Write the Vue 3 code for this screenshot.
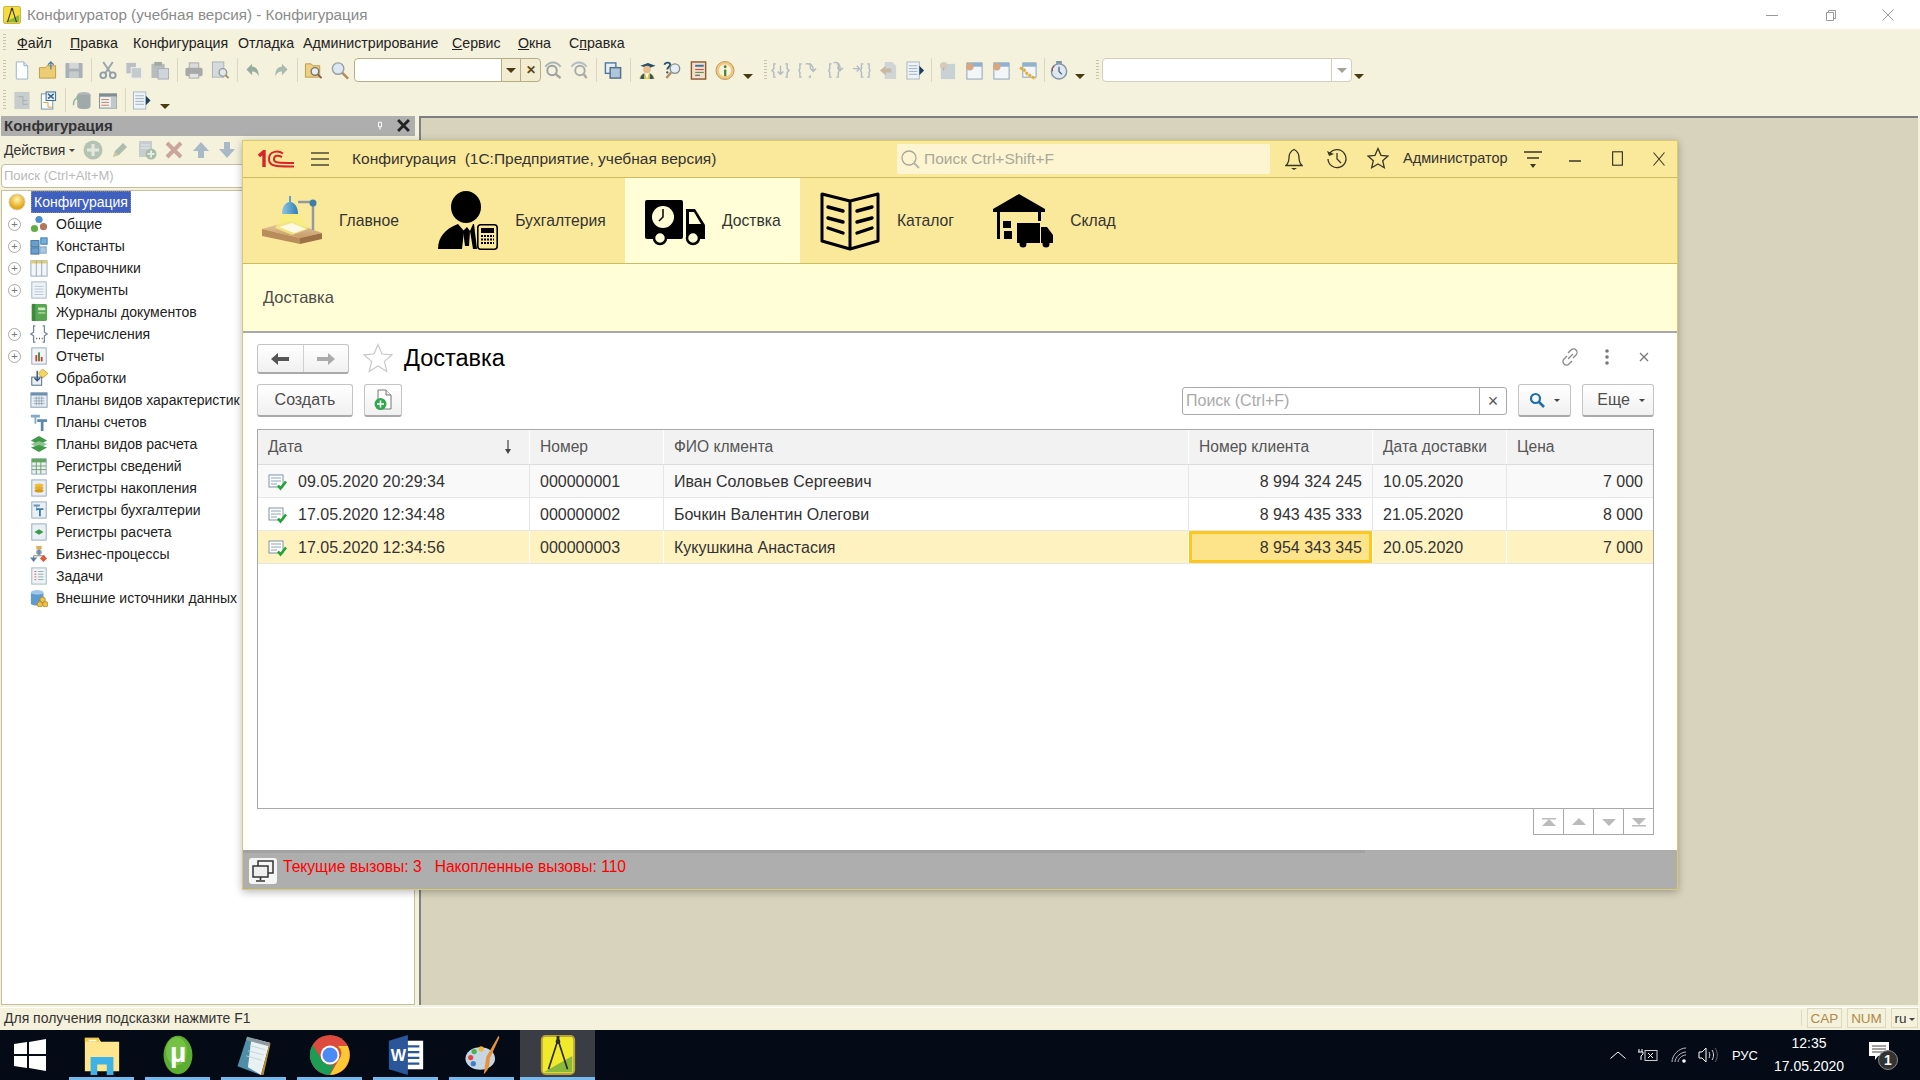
<script setup>
// menu du configurateur
const menu = [
  { u: 'Ф', t: 'айл', w: 53 },
  { u: 'П', t: 'равка', w: 63 },
  { p: 'Конфигурация', w: 105 },
  { p: 'Отладка', w: 65 },
  { p: 'Администрирование', w: 149 },
  { u: 'С', t: 'ервис', w: 66 },
  { u: 'О', t: 'кна', w: 51 },
  { p: 'С', u: 'п', t: 'равка', w: 60 }
]

// petites icônes 20x20
const ic = {
  new: '<path d="M4 1h8l4 4v14H4z" fill="#fdfeff" stroke="#9db2c6"/><path d="M12 1v4h4" fill="#d5e4f2" stroke="#9db2c6"/>',
  open: '<path d="M1 7h6l2-2h9v13H1z" fill="#eccd74" stroke="#b99b49"/><path d="M13 9V1M10 4l3-3 3 3" fill="none" stroke="#5a7ea0" stroke-width="1.4"/>',
  save: '<rect x="1" y="2" width="18" height="16" rx="1" fill="#aab1b5"/><rect x="5" y="2" width="10" height="6" fill="#d3d7d9"/><rect x="5" y="11" width="10" height="7" fill="#c5cacd"/>',
  cut: '<path d="M5 1l8 12M15 1L7 13" stroke="#9aa6ae" stroke-width="2"/><circle cx="5" cy="15" r="3" fill="none" stroke="#8f9ca6" stroke-width="2"/><circle cx="15" cy="15" r="3" fill="none" stroke="#8f9ca6" stroke-width="2"/>',
  copy: '<rect x="2" y="2" width="10" height="11" fill="#b9bfc4"/><rect x="7" y="7" width="11" height="11" fill="#c5cacd" stroke="#eee"/>',
  paste: '<rect x="1" y="3" width="14" height="15" rx="1" fill="#b8bcbc"/><rect x="4" y="1" width="8" height="4" fill="#a4a99f"/><rect x="8" y="8" width="11" height="11" fill="#cfd4d8" stroke="#aab"/>',
  print: '<rect x="5" y="2" width="10" height="6" fill="#dcdcdc" stroke="#aaa"/><rect x="1" y="7" width="18" height="9" rx="2" fill="#a8a8a6"/><rect x="5" y="13" width="10" height="5" fill="#e2e2e2" stroke="#aaa"/>',
  prev: '<rect x="2" y="1" width="12" height="16" fill="#d6dadd" stroke="#aab3ba"/><circle cx="13" cy="12" r="4" fill="#e2e9ee" stroke="#9a9a94" stroke-width="1.5"/><path d="M16 15l3 3" stroke="#a58d6c" stroke-width="2"/>',
  undo: '<path d="M8 3L2 9l6 6v-4c3 0 5 1 7 5 0-6-2-10-7-10z" fill="#9aaba2"/>',
  redo: '<path d="M12 3l6 6-6 6v-4c-3 0-5 1-7 5 0-6 2-10 7-10z" fill="#a9bab1"/>',
  find: '<path d="M1 3h6l2 2h7v12H1z" fill="#ecd183" stroke="#b99b49"/><circle cx="11" cy="11" r="4" fill="#e6eef4" stroke="#7d7468" stroke-width="1.5"/><path d="M14 14l4 4" stroke="#85604a" stroke-width="2"/>',
  mag: '<circle cx="8" cy="8" r="6" fill="#dbe8f3" stroke="#9a9f9f" stroke-width="1.5"/><path d="M12.500 12.500l6 6" stroke="#b08a61" stroke-width="2.500"/>',
  back: '<circle cx="9" cy="10" r="5" fill="none" stroke="#9a9f9f" stroke-width="2"/><path d="M13 14l5 4" stroke="#a8a39a" stroke-width="2.500"/><path d="M2 6C6 0 14 0 18 6" fill="none" stroke="#a9b5b5" stroke-width="2"/>',
  fwd: '<circle cx="11" cy="10" r="5" fill="none" stroke="#a6abab" stroke-width="2"/><path d="M15 14l3 4" stroke="#aca79e" stroke-width="2.500"/><path d="M2 6C6 0 14 0 18 6" fill="none" stroke="#b3bebe" stroke-width="2"/>',
  wins: '<rect x="2" y="2" width="11" height="11" fill="#e8eef3" stroke="#4f7ba3" stroke-width="1.500"/><rect x="7" y="7" width="11" height="11" fill="#aec6db" stroke="#53708a" stroke-width="1.500"/>',
  student: '<path d="M3 5l8-3 8 3-8 3z" fill="#274f68"/><circle cx="10" cy="9" r="4" fill="#e9bd8f"/><path d="M2 19c1-5 4-6 8-6s7 1 8 6z" fill="#e8c43a"/><path d="M8 13l2 6 2-6z" fill="#fff"/><path d="M3 19c0-3 2-5 4-6v6zM17 19c0-3-2-5-4-6v6z" fill="#2b5872"/>',
  help: '<path d="M1 4c1-3 6-3 6 0 0 2-3 2-3 5" fill="none" stroke="#25506e" stroke-width="2"/><circle cx="4" cy="12" r="1.200" fill="#25506e"/><circle cx="12" cy="8" r="5" fill="#e6eff6" stroke="#8b8f8c" stroke-width="1.500"/><path d="M8 12l-5 6" stroke="#b58b60" stroke-width="2.500"/>',
  bookr: '<rect x="2" y="1" width="15" height="18" fill="#f1dfca" stroke="#8d5a36" stroke-width="1.500"/><path d="M6 5h9" stroke="#3a6ea5" stroke-width="2"/><path d="M6 9h9" stroke="#d33"/><path d="M6 12h9" stroke="#3a8a3a"/><path d="M6 15h5" stroke="#444"/>',
  info: '<circle cx="10" cy="10" r="9.500" fill="#f3c67a" stroke="#b89a6a"/><circle cx="10" cy="10" r="6.500" fill="#fbf3dd"/><rect x="9" y="9" width="2.400" height="7" fill="#3f8a2d"/><circle cx="10.200" cy="6" r="1.500" fill="#3f8a2d"/>',
  br1: '<path d="M5 3H3v5l-2 2 2 2v5h2M15 3h2v5l2 2-2 2v5h-2" fill="none" stroke="#b3bcc4" stroke-width="1.500"/><path d="M10 5v9M7 11l3 3 3-3" fill="none" stroke="#b3bcc4" stroke-width="1.500"/>',
  br2: '<path d="M4 17H2v-5l-1-2 1-2V3h2M11 3h2v5M11 17h2v-2" fill="none" stroke="#b3bcc4" stroke-width="1.500"/><path d="M8 3c6-1 8 2 8 7M13 8l3 3 3-3" fill="none" stroke="#b3bcc4" stroke-width="1.500"/>',
  br3: '<path d="M7 3H5v5l-1 2 1 2v5h2M12 17h2v-5l1-2-1-2V3h-2" fill="none" stroke="#b3bcc4" stroke-width="1.500"/><path d="M9 2c5-2 7 2 7 7M13 7l3 3 3-3" fill="none" stroke="#b3bcc4" stroke-width="1.500"/>',
  br4: '<path d="M1 8h6M5 5l3 3-3 3" fill="none" stroke="#b3bcc4" stroke-width="1.500"/><path d="M12 3h-2v5l-1 2 1 2v5h2M16 3h2v5l1 2-1 2v5h-2" fill="none" stroke="#b3bcc4" stroke-width="1.500"/>',
  pdoc: '<path d="M6 1h8l4 4v14H6z" fill="#cfd4d6"/><path d="M1 10l6-5v3h6v4H7v3z" fill="#c8b9a4"/>',
  runb: '<rect x="1" y="1" width="13" height="18" fill="#eef3f7" stroke="#a8b7c4"/><path d="M3 5h9M3 8h9M3 11h9M3 14h9" stroke="#9fb1c1"/><path d="M14 5l5 5-5 5z" fill="#1f3f5f"/>',
  pmag: '<rect x="3" y="3" width="15" height="16" fill="#c8d1d4"/><circle cx="6" cy="5" r="4" fill="#d5cbbd"/><path d="M6 10v-3" stroke="#aaa"/>',
  win1: '<rect x="2" y="2" width="16" height="17" fill="#f3f6f9" stroke="#88a2b8"/><rect x="2" y="2" width="16" height="4" fill="#90b2cf"/><circle cx="5" cy="6" r="4" fill="#d4a884"/>',
  win2: '<rect x="4" y="2" width="14" height="15" fill="#f3f6f9" stroke="#88a2b8"/><rect x="4" y="2" width="14" height="4" fill="#90b2cf"/><path d="M1 7l4 2 4 5 4 2 4 3" stroke="#e0ae30" stroke-width="3" stroke-dasharray="3 1" fill="none"/>',
  timer: '<circle cx="10" cy="11" r="8" fill="#dfe8ef" stroke="#7f95a8" stroke-width="1.500"/><rect x="7" y="0" width="6" height="3" fill="#7f95a8"/><path d="M10 6v5l3 3" stroke="#536a7e" stroke-width="1.400" fill="none"/><path d="M5 5a7 7 0 0 0-2 6" stroke="#a33" fill="none"/>',
  t1: '<rect x="2" y="1" width="16" height="18" fill="#c7cccd"/><path d="M6 6h5v8h5M11 10h4" stroke="#a8aeb0" fill="none"/>',
  t2: '<rect x="3" y="3" width="12" height="16" fill="#f8fbfd" stroke="#7891a7"/><rect x="8" y="1" width="10" height="9" fill="#e7f0f7" stroke="#35648f"/><path d="M10 3l6 5M16 3l-6 5" stroke="#35648f" stroke-width="1.500"/><path d="M5 12h5v5h4" stroke="#d9a03b" fill="none"/>',
  t3: '<ellipse cx="12" cy="4" rx="7" ry="3" fill="#b2b8ba"/><path d="M5 4v12c0 4 14 4 14 0V4z" fill="#a2a9ab"/><path d="M1 15c0-5 2-8 6-8M4 6l3 1-2 3" fill="none" stroke="#8eb59c" stroke-width="1.500"/>',
  t4: '<rect x="1" y="3" width="18" height="15" fill="#eef1f1" stroke="#808d92"/><rect x="1" y="3" width="18" height="3" fill="#808d92"/><rect x="13" y="6" width="6" height="12" fill="#c2c8c8"/><path d="M3 9h8M3 12h8M3 15h8" stroke="#c97d60"/>',
  add: '<circle cx="10" cy="10" r="9.500" fill="#b5c4b2"/><path d="M10 4v12M4 10h12" stroke="#e4e9df" stroke-width="3"/>',
  pen: '<path d="M3 17l2-6 8-8 4 4-8 8z" fill="#aebdac"/><path d="M3 17l2-5 3 3z" fill="#d4c8a4"/>',
  dadd: '<rect x="2" y="1" width="13" height="16" fill="#c7ccce"/><path d="M4 5h9M4 8h9" stroke="#dee"/><circle cx="14" cy="14" r="5.500" fill="#a8bda8"/><path d="M14 10.500v7M10.500 14h7" stroke="#e4ece0" stroke-width="2"/>',
  del: '<path d="M3 3l14 14M17 3L3 17" stroke="#c9a59b" stroke-width="4"/>',
  up: '<path d="M10 2l8 9h-5v7H7v-7H2z" fill="#a9bac6"/>',
  down: '<path d="M10 18l8-9h-5V2H7v7H2z" fill="#a9bac6"/>'
}

// barre d'outils : i = icône, s = séparateur
const bar1 = [
  { i: 'new' }, { i: 'open' }, { i: 'save' }, { s: 1 },
  { i: 'cut' }, { i: 'copy' }, { i: 'paste' }, { s: 1 },
  { i: 'print' }, { i: 'prev' }, { s: 1 },
  { i: 'undo' }, { i: 'redo' }, { s: 1 },
  { i: 'find' }, { i: 'mag' }
]
const bar2 = [
  { i: 'back' }, { i: 'fwd' }, { s: 1 }, { i: 'wins' }, { s: 1 },
  { i: 'student' }, { i: 'help' }, { i: 'bookr' }, { i: 'info' }
]
const bar3 = [
  { i: 'br1' }, { i: 'br2' }, { i: 'br3' }, { i: 'br4' }, { i: 'pdoc' }, { i: 'runb' }, { s: 1 },
  { i: 'pmag' }, { i: 'win1' }, { i: 'win1' }, { i: 'win2' }, { s: 1 }
]
const bar4 = [{ i: 't1' }, { i: 't2' }, { s: 1 }, { i: 't3' }, { i: 't4' }, { s: 1 }, { i: 'runb' }]

const actions = ['add', 'pen', 'dadd', 'del', 'up', 'down']

const treeIc = {
  common: '<circle cx="10" cy="5" r="4" fill="#4d8fc9"/><circle cx="5" cy="15" r="4" fill="#5cb043"/><circle cx="15" cy="13" r="4" fill="#b3775a"/>',
  consts: '<rect x="1" y="4" width="9" height="7" fill="#6a9ecb" stroke="#386e9e"/><rect x="12" y="1" width="7" height="7" fill="#6fb2e0" stroke="#386e9e"/><rect x="1" y="12" width="9" height="7" fill="#6a9ecb" stroke="#386e9e"/><rect x="11" y="11" width="7" height="7" fill="#a7c7e2" stroke="#7a9fc0"/>',
  cats: '<rect x="1" y="2" width="18" height="17" fill="#f3f6f8" stroke="#8ea6ba"/><rect x="1" y="2" width="18" height="3" fill="#e9cd64"/><path d="M7 2v17M13 2v17" stroke="#8ea6ba"/>',
  docs: '<rect x="2" y="1" width="16" height="18" fill="#eef3f7" stroke="#9db3c4"/><path d="M5 6h10M5 9h10M5 12h10M5 15h10" stroke="#b4c5d2"/>',
  jour: '<rect x="2" y="1" width="17" height="19" rx="2" fill="#58a552"/><rect x="2" y="1" width="4" height="19" fill="#3e8a3d"/><rect x="9" y="5" width="8" height="3" fill="#cfe8c6"/><rect x="9" y="10" width="8" height="2" fill="#9dce93"/>',
  enums: '<path d="M6 1H4v7l-3 2 3 2v7h2M14 1h2v7l3 2-3 2v7h-2" fill="none" stroke="#6f8599" stroke-width="1.400"/><path d="M7 15h1M10 15h1M13 15h1" stroke="#444" stroke-width="1.500"/>',
  reps: '<rect x="2" y="1" width="16" height="18" fill="#f1f4f7" stroke="#8ea6ba"/><rect x="6" y="9" width="2" height="7" fill="#d33"/><rect x="9" y="6" width="2" height="10" fill="#3a8a3a"/><rect x="12" y="11" width="2" height="5" fill="#d33"/>',
  proc: '<path d="M14 0l6 5-6 5-5-5z" fill="#f2d564" stroke="#c8a93d"/><rect x="2" y="9" width="11" height="9" fill="#e8eff5" stroke="#44607b"/><path d="M8 2v10M5 10l3 3 3-3" fill="none" stroke="#34516b" stroke-width="1.500"/>',
  chars: '<rect x="1" y="2" width="18" height="16" fill="#e8eef3" stroke="#7c97ae"/><rect x="1" y="2" width="18" height="3" fill="#6f8fae"/><path d="M4 8h12M4 11h12M4 14h12M7 6v10M10 6v10M13 6v10" stroke="#97a8b8"/>',
  acc: '<path d="M1 2h10v3H7v7H5V5H1z" fill="#82a8c8"/><path d="M8 7h11v3h-4v10h-3V10H8z" fill="#5a88b0"/>',
  calc: '<path d="M10 1l9 5-9 5-9-5z" fill="#3f9a48"/><path d="M1 10l9-3 9 3-9 5z" fill="#8fc28f"/><path d="M1 14l9-3 9 3-9 5z" fill="#3f9a48"/>',
  info: '<rect x="2" y="2" width="16" height="17" fill="#e9f0f4" stroke="#8ea6ba"/><rect x="2" y="2" width="16" height="4" fill="#5faa58"/><path d="M7 2v17M12 2v17M2 10h16M2 14h16" stroke="#6c9e66"/>',
  accum: '<rect x="2" y="1" width="16" height="18" fill="#e8eff5" stroke="#8ea6ba"/><ellipse cx="10" cy="7" rx="5" ry="2" fill="#f0bd3c"/><ellipse cx="10" cy="10" rx="5" ry="2" fill="#e8ad2a"/><ellipse cx="10" cy="13" rx="5" ry="2" fill="#d89a1e"/>',
  bacc: '<rect x="2" y="1" width="16" height="18" fill="#e8eff5" stroke="#8ea6ba"/><path d="M4 4h7v2H8v5H7V6H4z" fill="#6a96bb"/><path d="M7 8h8v2h-3v7h-2v-7H7z" fill="#3f79a8"/>',
  rcalc: '<rect x="2" y="1" width="16" height="18" fill="#e8eff5" stroke="#8ea6ba"/><path d="M5 10l5-3 5 3-5 3z" fill="#3f9a48"/>',
  bp: '<rect x="7" y="1" width="6" height="4" fill="#dbb15c"/><circle cx="10" cy="8" r="3" fill="#7fa0bf"/><path d="M10 5v6M4 12h12M4 12v3M16 12v3" stroke="#777" fill="none"/><path d="M0 14h8l-4 5z" fill="#5a82a8"/><path d="M15 11l4 4-4 4-4-4z" fill="#e05a3a"/>',
  tasks: '<rect x="2" y="1" width="16" height="18" fill="#f0f3f6" stroke="#9db3c4"/><path d="M5 5h2M5 8h2M5 11h2M5 14h2" stroke="#c55"/><path d="M9 5h6M9 8h6M9 11h6M9 14h6" stroke="#8aa"/>',
  ext: '<ellipse cx="8" cy="4" rx="7" ry="3" fill="#9ec7e8"/><path d="M1 4v12c0 3 14 3 14 0V4c0 3-14 3-14 0z" fill="#5d9bd0"/><circle cx="14" cy="12" r="3" fill="#efc14d" stroke="#b78a20"/><circle cx="11" cy="17" r="3" fill="#efc14d" stroke="#b78a20"/><circle cx="17" cy="17" r="3" fill="#efc14d" stroke="#b78a20"/>'
}

const tree = [
  { n: 'Общие', i: 'common', p: 1 },
  { n: 'Константы', i: 'consts', p: 1 },
  { n: 'Справочники', i: 'cats', p: 1 },
  { n: 'Документы', i: 'docs', p: 1 },
  { n: 'Журналы документов', i: 'jour' },
  { n: 'Перечисления', i: 'enums', p: 1 },
  { n: 'Отчеты', i: 'reps', p: 1 },
  { n: 'Обработки', i: 'proc' },
  { n: 'Планы видов характеристик', i: 'chars' },
  { n: 'Планы счетов', i: 'acc' },
  { n: 'Планы видов расчета', i: 'calc' },
  { n: 'Регистры сведений', i: 'info' },
  { n: 'Регистры накопления', i: 'accum' },
  { n: 'Регистры бухгалтерии', i: 'bacc' },
  { n: 'Регистры расчета', i: 'rcalc' },
  { n: 'Бизнес-процессы', i: 'bp' },
  { n: 'Задачи', i: 'tasks' },
  { n: 'Внешние источники данных', i: 'ext' }
]

const columns = ['Дата', 'Номер', 'ФИО клмента', 'Номер клиента', 'Дата доставки', 'Цена']

const rows = [
  { date: '09.05.2020 20:29:34', num: '000000001', fio: 'Иван Соловьев Сергеевич', tel: '8 994 324 245', deliv: '10.05.2020', price: '7 000' },
  { date: '17.05.2020 12:34:48', num: '000000002', fio: 'Бочкин Валентин Олегови', tel: '8 943 435 333', deliv: '21.05.2020', price: '8 000' },
  { date: '17.05.2020 12:34:56', num: '000000003', fio: 'Кукушкина Анастасия', tel: '8 954 343 345', deliv: '20.05.2020', price: '7 000' }
]
</script>

<template>
  <div class="screen">
    <!-- Заголовок конфигуратора -->
    <div class="titlebar">
      <svg class="app-ic" viewBox="0 0 20 20"><rect x="0.500" y="0.500" width="19" height="19" rx="2" fill="#f3dc3c" stroke="#c9a93a"/><path d="M2 18l16-8v8z" fill="#8ab83a"/><path d="M10 2L5 18M10 2l5 16" stroke="#333" stroke-width="1.200" fill="none"/><circle cx="10" cy="3.500" r="1.300" fill="#333"/></svg>
      <span class="app-title">Конфигуратор (учебная версия) - Конфигурация</span>
      <div class="win-btns">
        <svg viewBox="0 0 12 12"><path d="M0 6.500h12" stroke="#999"/></svg>
        <svg viewBox="0 0 12 12"><path d="M2.500 3.500h7v8h-7zM4.500 3.500v-2h7v8h-2" fill="none" stroke="#999"/></svg>
        <svg viewBox="0 0 12 12"><path d="M0.500 0.500l11 11M11.500 0.500l-11 11" stroke="#999"/></svg>
      </div>
    </div>

    <div class="menubar">
      <span class="grip"></span>
      <span v-for="m in menu" :key="m.w + (m.p || m.t)" class="menu-item" :style="{ width: m.w + 'px' }">{{ m.p }}<u v-if="m.u">{{ m.u }}</u>{{ m.t }}</span>
    </div>

    <div class="toolbar">
      <span class="grip"></span>
      <div class="tools">
        <template v-for="(b, k) in bar1" :key="k">
          <span v-if="b.s" class="sep"></span>
          <svg v-else class="tool" viewBox="0 0 20 20" v-html="ic[b.i]"></svg>
        </template>
      </div>
      <div class="combo">
        <span class="combo-field"></span>
        <span class="combo-btn"><i class="tri"></i></span>
        <span class="combo-btn combo-x">✕</span>
      </div>
      <div class="tools tools-b">
        <template v-for="(b, k) in bar2" :key="k">
          <span v-if="b.s" class="sep"></span>
          <svg v-else class="tool" viewBox="0 0 20 20" v-html="ic[b.i]"></svg>
        </template>
      </div>
      <i class="tri drop"></i>
      <span class="grip grip-b"></span>
      <div class="tools tools-c">
        <template v-for="(b, k) in bar3" :key="k">
          <span v-if="b.s" class="sep"></span>
          <svg v-else class="tool tool-w" viewBox="0 0 20 20" v-html="ic[b.i]"></svg>
        </template>
        <svg class="tool timer" viewBox="0 0 20 20" v-html="ic.timer"></svg>
      </div>
      <i class="tri drop drop-t"></i>
      <span class="grip grip-c"></span>
      <div class="combo2"><span class="combo2-btn"><i class="tri tri-gray"></i></span></div>
      <i class="tri drop drop-l"></i>
    </div>

    <div class="toolbar toolbar-2">
      <span class="grip"></span>
      <div class="tools tools-2">
        <template v-for="(b, k) in bar4" :key="k">
          <span v-if="b.s" class="sep"></span>
          <svg v-else class="tool" viewBox="0 0 20 20" v-html="ic[b.i]"></svg>
        </template>
      </div>
      <i class="tri drop"></i>
    </div>

    <div class="workspace">
      <!-- Дерево конфигурации -->
      <aside class="cfg-panel">
        <div class="cfg-head">
          <span>Конфигурация</span>
          <svg class="pin" viewBox="0 0 8 12"><path d="M2 1h4v6H2zM4 7v4" fill="none" stroke="#fff" stroke-width="1.300"/></svg>
          <svg class="cfg-x" viewBox="0 0 12 12"><path d="M1 1l10 10M11 1L1 11" stroke="#222" stroke-width="2.600"/></svg>
        </div>
        <div class="cfg-actions">
          <span class="actions-label">Действия</span>
          <i class="mini-tri"></i>
          <svg v-for="a in actions" :key="a" class="action" viewBox="0 0 20 20" v-html="ic[a]"></svg>
        </div>
        <div class="cfg-search">Поиск (Ctrl+Alt+M)</div>
        <div class="cfg-tree">
          <div class="node">
            <svg class="root-ic" viewBox="0 0 20 20"><defs><radialGradient id="gold" cx="0.500" cy="0.350"><stop offset="0" stop-color="#fff4b0"/><stop offset="1" stop-color="#e3a91e"/></radialGradient></defs><circle cx="10" cy="10" r="9" fill="url(#gold)" stroke="#d8d3c0"/></svg>
            <span class="root-label">Конфигурация</span>
          </div>
          <div v-for="t in tree" :key="t.n" class="node">
            <span class="plus-slot"><span v-if="t.p" class="plus">+</span></span>
            <svg class="node-ic" viewBox="0 0 20 20" v-html="treeIc[t.i]"></svg>
            <span class="node-label">{{ t.n }}</span>
          </div>
        </div>
      </aside>
      <div class="mdi"></div>
    </div>

    <div class="statusbar">
      <span class="hint">Для получения подсказки нажмите F1</span>
      <span class="ind ind-cap">CAP</span>
      <span class="ind ind-num">NUM</span>
      <span class="ind ind-ru">ru<i class="mini-tri"></i></span>
    </div>

    <div class="taskbar">
      <svg class="start" viewBox="0 0 32 32"><path d="M0 5l13-2v12H0zM15 3l17-3v15H15zM0 17h13v12L0 27zM15 17h17v15l-17-3z" fill="#fff"/></svg>
      <div class="task"><svg viewBox="0 0 36 42"><path d="M0 3h14l3 4h19v31H0z" fill="#ffe58e"/><rect x="0" y="3" width="15" height="4" fill="#f7c948"/><rect x="4" y="5" width="8" height="1.500" fill="#fff"/><path d="M6 42V23h24v19h-7V31H13v11z" fill="#3fb3e8"/></svg></div>
      <div class="task"><svg viewBox="0 0 40 54"><ellipse cx="20" cy="27" rx="19.500" ry="26" fill="#5cae32"/><ellipse cx="18" cy="22" rx="14" ry="19" fill="#76c043"/><text x="20" y="37" text-anchor="middle" font-family="Liberation Sans" font-size="38" font-weight="700" fill="#fff">µ</text></svg></div>
      <div class="task"><svg viewBox="0 0 38 46"><path d="M11 2l26 7-10 37L0 36z" fill="#4e8ea6"/><path d="M16 4l21 5-10 37-15-9z" fill="#e9f1f3"/><path d="M14 12l18 5M12 18l18 5M10 24l18 5" stroke="#bcd1d8"/><path d="M11 2l26 7-1 4-26-7z" fill="#8c9aa0"/><path d="M37 9l-10 37 3 0 8-36z" fill="#b58c3a"/></svg></div>
      <div class="task"><svg viewBox="0 0 36 36"><circle cx="18" cy="18" r="18" fill="#dd4b3e"/><path d="M18 36a18 18 0 0 1-15.600-27L11 23a8 8 0 0 0 11 3z" fill="#1d9c53"/><path d="M18 10h15.800A18 18 0 0 1 18 36l8-14a8 8 0 0 0-1-12z" fill="#fcc934"/><circle cx="18" cy="18" r="8.500" fill="#fff"/><circle cx="18" cy="18" r="6.800" fill="#4c8bf5"/></svg></div>
      <div class="task"><svg viewBox="0 0 36 42"><rect x="14" y="6" width="22" height="30" fill="#fff"/><path d="M18 12h14M18 18h14M18 24h14M18 30h14" stroke="#2b579a" stroke-width="2.500"/><path d="M0 6L20 0v42L0 36z" fill="#2b579a"/><text x="10" y="27" text-anchor="middle" font-family="Liberation Sans" font-size="17" font-weight="700" fill="#fff">W</text></svg></div>
      <div class="task"><svg viewBox="0 0 40 46"><ellipse cx="18" cy="27" rx="17" ry="13" fill="#c6d6e4"/><circle cx="7" cy="26" r="3" fill="#e0483e"/><circle cx="11" cy="19" r="3" fill="#4cae4f"/><circle cx="19" cy="16" r="3" fill="#f2b632"/><circle cx="10" cy="33" r="3" fill="#3f7fc1"/><path d="M39 1L25 25l-3 20c5-4 7-9 7-18L40 3z" fill="#e8923a"/></svg></div>
      <div class="task task-on"><svg viewBox="0 0 36 42"><rect x="1" y="1" width="34" height="40" rx="4" fill="#f1ea2a" stroke="#b9a040" stroke-width="2"/><path d="M3 39l30-17v17z" fill="#8ab83a"/><path d="M18 5L8 36M18 5l10 31" stroke="#2c2c2c" stroke-width="1.800" fill="none"/><circle cx="18" cy="7" r="2.500" fill="#2c2c2c"/><rect x="16.500" y="1" width="3" height="5" fill="#2c2c2c"/></svg></div>
      <div class="tray">
        <svg class="chev" viewBox="0 0 16 8"><path d="M0.500 7.500L8 1l7.500 6.500" fill="none" stroke="#fff"/></svg>
        <svg class="power" viewBox="0 0 20 14"><path d="M1 1v3M4 1v3M0 4h5v2l-2 2v4" fill="none" stroke="#fff"/><rect x="7" y="2.500" width="12" height="10" fill="none" stroke="#ccc"/><path d="M10 5l5 5M15 5l-5 5" stroke="#fff"/></svg>
        <svg class="wifi" viewBox="0 0 16 16"><path d="M1 15C1 8 8 1 15 1M4 15c0-5 6-10 11-10M7 15c0-3 4-7 8-7" fill="none" stroke="#bbb"/><circle cx="13" cy="14" r="1.800" fill="#fff"/></svg>
        <svg class="vol" viewBox="0 0 20 16"><path d="M1 5h3l4-4v14l-4-4H1z" fill="none" stroke="#fff"/><path d="M11 5c1 2 1 4 0 6M14 3c2 3 2 7 0 10" fill="none" stroke="#ddd"/><path d="M17 1c3 4 3 10 0 14" fill="none" stroke="#666"/></svg>
        <span class="lang">РУС</span>
        <div class="clock"><div>12:35</div><div>17.05.2020</div></div>
        <div class="notif">
          <svg viewBox="0 0 20 18"><path d="M0 0h20v14h-11l-3 4v-4H0z" fill="#fff"/><path d="M3 4h14M3 7h14M3 10h14" stroke="#444"/></svg>
          <span class="badge">1</span>
        </div>
      </div>
    </div>

    <!-- Окно клиента 1С -->
    <div class="window">
      <header class="win-head">
        <svg class="logo" viewBox="0 0 37 18"><path d="M1 6l5-4.500V17" fill="none" stroke="#d8232a" stroke-width="3.400"/><path d="M25 3.500C21 .8 11 0 11 9c0 8 8 7.500 25 7.500M24 7c-4-2-8-2-8 2.500 0 3.500 5 3.500 20 3.500" fill="none" stroke="#d8232a" stroke-width="2"/></svg>
        <svg class="burger" viewBox="0 0 18 14"><path d="M0 1h18M0 7h18M0 13h18" stroke="#4f4a36" stroke-width="1.300"/></svg>
        <span class="win-title">Конфигурация&nbsp; (1С:Предприятие, учебная версия)</span>
        <div class="global-search">
          <svg viewBox="0 0 20 20"><circle cx="9" cy="9" r="7" fill="none" stroke="#a9a79c" stroke-width="1.300"/><path d="M14 14l5 5" stroke="#b7b5aa" stroke-width="2"/></svg>
          <span>Поиск Ctrl+Shift+F</span>
        </div>
        <svg class="head-ic bell" viewBox="0 0 18 22"><path d="M9 1.500c-4 2-5 4-5 8 0 4-1 6-3 8h16c-2-2-3-4-3-8 0-4-1-6-5-8z" fill="none" stroke="#3a3626" stroke-width="1.300"/><path d="M6 20h6L9 22z" fill="#3a3626"/></svg>
        <svg class="head-ic hist" viewBox="0 0 22 22"><path d="M4 5a9 9 0 1 1-2 6" fill="none" stroke="#3a3626" stroke-width="1.300"/><path d="M1 3l2 5 5-2z" fill="#3a3626"/><path d="M11 5v6l4 4" fill="none" stroke="#3a3626" stroke-width="1.300"/></svg>
        <svg class="head-ic fav" viewBox="0 0 22 22"><path d="M11 1.500l3 6.800 7 .7-5.300 4.700 1.600 7L11 17l-6.300 3.700 1.600-7L1 9l7-.7z" fill="none" stroke="#3a3626" stroke-width="1.300"/></svg>
        <span class="admin">Администратор</span>
        <svg class="head-ic lines" viewBox="0 0 20 20"><path d="M1 2h18M4 8h12" stroke="#3a3626" stroke-width="1.300"/><path d="M7 14h6l-3 4z" fill="#3a3626"/></svg>
        <svg class="head-ic wmin" viewBox="0 0 12 12"><path d="M0 11h12" stroke="#3a3626" stroke-width="1.500"/></svg>
        <svg class="head-ic wmax" viewBox="0 0 12 16"><rect x="0.700" y="0.700" width="10.600" height="14.600" fill="none" stroke="#2a2a1e" stroke-width="1.200"/></svg>
        <svg class="head-ic wclose" viewBox="0 0 12 14"><path d="M0.500 0.500l11 13M11.500 0.500l-11 13" stroke="#3a3626" stroke-width="1.100"/></svg>
      </header>

      <nav class="sections">
        <div class="section">
          <svg viewBox="0 0 60 60">
            <defs>
              <linearGradient id="board" x1="0" y1="0" x2="0" y2="1"><stop offset="0" stop-color="#e8cda6"/><stop offset="1" stop-color="#c69a68"/></linearGradient>
              <linearGradient id="shade" x1="0" y1="0" x2="1" y2="0"><stop offset="0" stop-color="#8ec5e4"/><stop offset="1" stop-color="#2f7fb4"/></linearGradient>
            </defs>
            <path d="M0 38l28-8 32 12-22 5z" fill="url(#board)"/><path d="M0 38l38 9v6L0 45z" fill="#b98c5c"/><path d="M38 47l22-5v6l-22 5z" fill="#9c7146"/>
            <path d="M23 20h12l11 18-16 6-17-7z" fill="#f6ee7a" opacity="0.800"/><path d="M17 36l13-4 14 6-12 4z" fill="#fdf9e4"/>
            <path d="M36 11h15M51 12v27" stroke="#8f9aa2" stroke-width="2.500"/><circle cx="51" cy="12" r="3.500" fill="#3d7ea8"/>
            <path d="M20 23c0-7 3-11 7-12V5h2v6c4 1 7 5 7 12z" fill="url(#shade)"/>
          </svg>
          <span>Главное</span>
        </div>
        <div class="section">
          <svg viewBox="0 0 60 60">
            <ellipse cx="28" cy="16" rx="15" ry="16"/>
            <path d="M0 58c0-12 7-20 20-25h16l3 25z"/>
            <path d="M20 33h15l-3 7 3 18H24l2-18z" fill="#fbe99b"/><path d="M25 40l4-4 3 4-1 15h-4z"/>
            <rect x="39.800" y="33.800" width="19.400" height="24.400" rx="3" fill="#fbe99b" stroke="#000" stroke-width="1.600"/><rect x="43" y="37" width="13" height="5"/>
            <path d="M43 45h13M43 48.500h13M43 52h13" stroke="#000" stroke-width="2" stroke-dasharray="2 1"/>
          </svg>
          <span>Бухгалтерия</span>
        </div>
        <div class="section section-on">
          <svg viewBox="0 0 60 60">
            <rect x="0" y="9" width="38" height="39" rx="2"/><circle cx="18" cy="26" r="11" fill="#fffed6"/><path d="M18 18v8l-4 4" fill="none" stroke="#000" stroke-width="1.500"/>
            <path d="M41 18h9l10 16v14H41z"/><path d="M44 21h5l7 12H44z" fill="#fffed6"/>
            <circle cx="15" cy="47" r="6" fill="#fffed6" stroke="#000" stroke-width="2.500"/><circle cx="48" cy="47" r="6" fill="#fffed6" stroke="#000" stroke-width="2.500"/>
          </svg>
          <span>Доствка</span>
        </div>
        <div class="section">
          <svg viewBox="0 0 60 60">
            <path d="M2 3l28 7 28-7v47l-28 8-28-8zM30 10v48" fill="none" stroke="#000" stroke-width="3" stroke-linejoin="round"/>
            <path d="M8 16l15 4M8 27l15 4M8 37l15 5M37 20l15-4M37 31l15-4M37 42l15-5" stroke="#000" stroke-width="3.400" stroke-linecap="round"/>
          </svg>
          <span>Каталог</span>
        </div>
        <div class="section">
          <svg viewBox="0 0 60 60">
            <path d="M0 18L26 3l26 15v3H0z"/><rect x="4" y="18" width="3" height="30"/><rect x="45" y="18" width="3" height="12"/>
            <rect x="10" y="30" width="8" height="7"/><rect x="11" y="40" width="8" height="8"/>
            <rect x="24" y="32" width="23" height="20"/><path d="M48 36h6l6 8v8H48z"/>
            <circle cx="30" cy="53" r="3.500"/><circle cx="53" cy="53" r="3.500"/>
          </svg>
          <span>Склад</span>
        </div>
      </nav>

      <div class="subpanel"><span>Доставка</span></div>

      <main class="content">
        <div class="form-head">
          <div class="nav-btns">
            <button class="nav-btn"><svg viewBox="0 0 18 12"><path d="M0 6l7-6v4h11v4H7v4z" fill="#555"/></svg></button>
            <button class="nav-btn"><svg viewBox="0 0 18 12"><path d="M18 6l-7-6v4H0v4h11v4z" fill="#aaa"/></svg></button>
          </div>
          <svg class="form-star" viewBox="0 0 30 30"><path d="M15 1.500l4 9.500 10 .8-7.600 6.600 2.400 10L15 23l-8.800 5.400 2.400-10L1 11.800l10-.8z" fill="#fff" stroke="#c8c8c8" stroke-width="1.200"/></svg>
          <h1>Доставка</h1>
          <div class="form-tools">
            <svg viewBox="0 0 20 20"><path d="M8 12l5-5M7 9l-3 3a3.500 3.500 0 0 0 5 5l3-3M13 11l3-3a3.500 3.500 0 0 0-5-5L8 6" fill="none" stroke="#888" stroke-width="1.300"/></svg>
            <svg viewBox="0 0 20 20"><circle cx="10" cy="4" r="1.800" fill="#777"/><circle cx="10" cy="10" r="1.800" fill="#777"/><circle cx="10" cy="16" r="1.800" fill="#777"/></svg>
            <svg viewBox="0 0 20 20"><path d="M6 6l8 8M14 6l-8 8" stroke="#777" stroke-width="1.300"/></svg>
          </div>
        </div>

        <div class="cmd-bar">
          <button class="btn btn-create">Создать</button>
          <button class="btn btn-doc"><svg viewBox="0 0 18 22"><path d="M4 1h8l5 5v14H4z" fill="#fff" stroke="#777"/><path d="M12 1v5h5" fill="#eee" stroke="#777"/><circle cx="6.500" cy="15" r="6" fill="#2fa84f"/><path d="M6.500 11.500v7M3 15h7" stroke="#fff" stroke-width="1.600"/></svg></button>
          <div class="find">
            <span class="find-text">Поиск (Ctrl+F)</span>
            <span class="find-x">×</span>
          </div>
          <button class="btn btn-search"><svg viewBox="0 0 16 16"><circle cx="6.500" cy="6.500" r="4.500" fill="none" stroke="#1f6fa8" stroke-width="2.200"/><path d="M10 10l5 5" stroke="#1f6fa8" stroke-width="2.600"/></svg><i class="mini-tri"></i></button>
          <button class="btn btn-more">Еще<i class="mini-tri"></i></button>
        </div>

        <div class="grid">
          <div class="grid-row grid-headrow">
            <div v-for="c in columns" :key="c" class="cell head-cell">
              {{ c }}
              <svg v-if="c === 'Дата'" class="sort" viewBox="0 0 8 14"><path d="M4 0v12" stroke="#444" stroke-width="1.200"/><path d="M1 9h6l-3 5z" fill="#444"/></svg>
            </div>
          </div>
          <div v-for="(r, idx) in rows" :key="r.num" class="grid-row data-row" :class="{ 'row-alt': idx === 0, 'row-sel': idx === 2 }">
            <div class="cell date-cell">
              <svg class="doc-ic" viewBox="0 0 20 18"><rect x="1" y="2" width="14" height="12" fill="#fff" stroke="#7d93a8"/><path d="M3 5h10M3 8h10M3 11h6" stroke="#8ea2b4"/><path d="M10 12.500l2.500 3 5.500-7" fill="none" stroke="#1fa531" stroke-width="2.600"/></svg>
              {{ r.date }}
            </div>
            <div class="cell">{{ r.num }}</div>
            <div class="cell">{{ r.fio }}</div>
            <div class="cell num-cell" :class="{ 'cell-cur': idx === 2 }">{{ r.tel }}</div>
            <div class="cell">{{ r.deliv }}</div>
            <div class="cell num-cell">{{ r.price }}</div>
          </div>
        </div>

        <div class="pager">
          <span><svg viewBox="0 0 14 10"><path d="M0 1h14v1.500H0z" fill="#bbb"/><path d="M7 2l7 7H0z" fill="#bbb"/></svg></span>
          <span><svg viewBox="0 0 14 10"><path d="M7 1l7 7H0z" fill="#bbb"/></svg></span>
          <span><svg viewBox="0 0 14 10"><path d="M7 9l7-7H0z" fill="#bbb"/></svg></span>
          <span><svg viewBox="0 0 14 10"><path d="M7 8L0 1h14zM0 8h14v1.500H0z" fill="#bbb"/></svg></span>
        </div>
      </main>

      <footer class="win-status">
        <span class="status-line"></span>
        <div class="status-main">
          <span class="status-btn"><svg viewBox="0 0 24 24"><rect x="7" y="2" width="15" height="12" fill="none" stroke="#333" stroke-width="1.500"/><rect x="2" y="7" width="15" height="11" fill="#eee" stroke="#333" stroke-width="1.500"/><path d="M9.500 18v3M5 22h9" stroke="#333" stroke-width="1.600"/></svg></span>
          <span class="status-text">Текущие вызовы: 3 &nbsp; Накопленные вызовы: 110</span>
        </div>
      </footer>
    </div>
  </div>
</template>

<style scoped>
.screen {
  position: relative;
  width: 1920px;
  height: 1080px;
  display: flex;
  flex-direction: column;
  overflow: hidden;
  background: #f4f1dc;
  font-family: "Liberation Sans", Arial, sans-serif;
}

.titlebar {
  height: 29px;
  display: flex;
  align-items: center;
  background: #fff;
  padding-left: 3px;
}
.app-ic { width: 18px; height: 18px; }
.app-title { margin-left: 6px; font-size: 15.200px; color: #8b8b8b; }
.win-btns { margin-left: auto; display: flex; gap: 46px; padding-right: 26px; }
.win-btns svg { width: 12px; height: 12px; }

.menubar {
  height: 28px;
  box-sizing: border-box;
  padding: 0 0 1px 3px;
  display: flex;
  align-items: center;
  font-size: 14.200px;
  color: #222;
}
.menubar .grip { margin-right: 11px; height: 18px; }
.menu-item { display: block; white-space: nowrap; }

.grip {
  width: 3px;
  height: 20px;
  flex: none;
  background: repeating-linear-gradient(#c9c4a8 0 1px, transparent 1px 3px);
}

.toolbar {
  height: 28px;
  box-sizing: border-box;
  padding: 0 0 2px 3px;
  display: flex;
  align-items: center;
}
.toolbar-2 { height: 30px; padding-bottom: 0; }
.tools { display: flex; align-items: center; margin-left: 3px; }
.tool { width: 26px; height: 19px; flex: none; }
.tool-w { width: 27px; }
.tools-b { margin-left: -1px; }
.tools-c { margin-left: 0; }
.timer { width: 22px; margin-left: 1px; }
.sep {
  width: 1px;
  height: 24px;
  flex: none;
  margin: 0 3px 0 4px;
  background: #dcd8bf;
}
.tools-c .sep { margin: 0 2px; }

.combo {
  width: 187px;
  height: 24px;
  margin-left: 1px;
  flex: none;
  display: flex;
  background: #f1ecd2;
  border: 1px solid #b8ad84;
  border-radius: 4px;
  box-sizing: border-box;
}
.combo-field { width: 148px; background: #fff; border-radius: 4px 0 0 4px; }
.combo-btn {
  width: 19px;
  display: flex;
  align-items: center;
  justify-content: center;
  border-left: 1px solid #b8ad84;
}
.combo-x { font-size: 12px; font-weight: 700; color: #5a4612; }

.tri {
  display: block;
  width: 0;
  height: 0;
  border-left: 5px solid transparent;
  border-right: 5px solid transparent;
  border-top: 5px solid #4a3a10;
}
.tri-gray { border-top-color: #a5a296; }
.drop { margin: 12px 0 0 5px; flex: none; }
.drop-t { margin-left: 5px; }
.drop-l { margin-left: 2px; }
.grip-b { margin-left: 11px; }
.grip-c { margin-left: 11px; }

.combo2 {
  width: 250px;
  height: 24px;
  margin-left: 3px;
  flex: none;
  background: #fff;
  border: 1px solid #d3cfba;
  border-radius: 4px;
  box-sizing: border-box;
  display: flex;
  justify-content: flex-end;
}
.combo2-btn {
  width: 19px;
  border-left: 1px solid #d3cfba;
  display: flex;
  align-items: center;
  justify-content: center;
}

.workspace {
  flex: 1;
  display: flex;
  padding: 1px 2px 2px 1px;
  min-height: 0;
  background: #f4f1dc;
}
.cfg-panel {
  width: 414px;
  flex: none;
  display: flex;
  flex-direction: column;
}
.cfg-head {
  height: 20px;
  box-sizing: border-box;
  padding: 0 0 1px 3px;
  display: flex;
  align-items: center;
  background: #aeaeae;
  font-size: 15px;
  font-weight: 700;
  color: #333;
}
.pin { width: 6px; height: 10px; margin-left: auto; margin-right: 14px; }
.cfg-x { width: 13px; height: 13px; margin-right: 5px; }

.cfg-actions {
  height: 28px;
  display: flex;
  align-items: center;
  padding-left: 3px;
  font-size: 14px;
  color: #333;
}
.actions-label { margin-right: 4px; }
.mini-tri {
  display: inline-block;
  width: 0;
  height: 0;
  border-left: 3px solid transparent;
  border-right: 3px solid transparent;
  border-top: 3px solid #444;
}
.action { width: 20px; height: 20px; margin-right: 6.800px; flex: none; }
.cfg-actions .mini-tri { margin-right: 8px; }

.cfg-search {
  height: 24px;
  box-sizing: border-box;
  border: 1px solid #c6bf9e;
  border-radius: 4px;
  background: #fff;
  padding-left: 2px;
  font-size: 13px;
  line-height: 22px;
  color: #b9b9b9;
}
.cfg-tree {
  flex: 1;
  margin-top: 2px;
  background: #fff;
  border: 1px solid #c6bf9e;
  font-size: 14px;
  color: #222;
  box-sizing: border-box;
}
.node {
  height: 22px;
  display: flex;
  align-items: center;
  white-space: nowrap;
}
.root-ic { width: 18px; height: 18px; margin-left: 6px; }
.root-label {
  margin-left: 5px;
  padding: 0 3px;
  height: 22px;
  line-height: 22px;
  background: #3f60be;
  color: #fff;
  outline: 1px dotted #88a;
  outline-offset: -1px;
}
.plus-slot { width: 27px; margin-left: 6px; flex: none; }
.plus {
  display: block;
  width: 11px;
  height: 11px;
  border-radius: 50%;
  border: 1px solid #aaa;
  font-size: 11px;
  line-height: 10px;
  text-align: center;
  color: #777;
}
.node-ic { width: 18px; height: 18px; flex: none; margin-left: -5px; }
.node-label { margin-left: 8px; }

.mdi {
  flex: 1;
  margin-left: 4px;
  background: #d8d3bc;
  border-top: 2px solid #7f7f7f;
  border-left: 2px solid #7f7f7f;
}

.statusbar {
  height: 23px;
  display: flex;
  align-items: center;
  gap: 5px;
  padding-bottom: 2px;
  font-size: 14px;
  color: #333;
  border-top: 1px solid #fff;
  box-sizing: border-box;
}
.hint { width: 1802px; padding-left: 4px; box-sizing: border-box; border-right: 1px solid #dcd8bf; }
.ind {
  height: 20px;
  line-height: 20px;
  text-align: center;
  border: 1px solid #dcd8bf;
  box-sizing: border-box;
  font-size: 13.500px;
  color: #b08a48;
}
.ind-cap { width: 35px; }
.ind-num { width: 39px; }
.ind-ru { width: 27px; color: #333; }
.ind-ru .mini-tri { margin: 0 0 2px 2px; }

.taskbar {
  height: 50px;
  position: relative;
  display: flex;
  align-items: stretch;
  background: #040b17;
  padding-left: 69px;
}
.start { position: absolute; left: 14px; top: 9px; width: 32px; height: 32px; }
.task {
  width: 65px;
  margin-right: 11px;
  display: flex;
  align-items: center;
  justify-content: center;
  box-sizing: border-box;
  border-bottom: 3px solid #76b9ed;
  padding-top: 2px;
}
.task svg { height: 40px; width: 40px; }
.task-on {
  width: 75px;
  margin-left: -5px;
  background: #3a3d43;
}
.tray {
  position: absolute;
  right: 0;
  top: 0;
  bottom: 0;
  display: flex;
  align-items: center;
  color: #fff;
  font-size: 14px;
}
.chev { width: 16px; height: 8px; margin-right: 12px; }
.power { width: 20px; height: 14px; margin-right: 13px; }
.wifi { width: 16px; height: 16px; margin-right: 11px; }
.vol { width: 20px; height: 16px; margin-right: 14px; }
.lang { margin-right: 15px; font-size: 13px; }
.clock { width: 72px; text-align: center; line-height: 23px; }
.notif { position: relative; width: 22px; height: 18px; margin: 0 29px 0 24px; }
.notif svg { width: 20px; height: 18px; display: block; margin-top: -4px; }
.badge {
  position: absolute;
  left: 9px;
  top: 4px;
  width: 20px;
  height: 20px;
  border-radius: 50%;
  background: #333;
  border: 1px solid #888;
  box-sizing: border-box;
  text-align: center;
  font-size: 14px;
  font-weight: 700;
  line-height: 18px;
}

/* окно поверх рабочего стола */
.window {
  position: absolute;
  left: 242px;
  top: 140px;
  width: 1436px;
  height: 750px;
  display: flex;
  flex-direction: column;
  box-sizing: border-box;
  background: #fff;
  border: 1px solid #d9c972;
  box-shadow: 0 2px 8px rgba(0, 0, 0, 0.28);
}
.win-head {
  height: 36px;
  flex: none;
  display: flex;
  align-items: center;
  background: #fbe99b;
  border-bottom: 1px solid #cdbb64;
  color: #333;
  font-size: 15.500px;
  position: relative;
}
.logo { width: 37px; height: 18px; margin-left: 15px; }
.burger { width: 18px; height: 14px; margin-left: 16px; }
.win-title { margin-left: 23px; white-space: nowrap; }
.global-search {
  position: absolute;
  left: 654px;
  top: 3px;
  width: 373px;
  height: 30px;
  display: flex;
  align-items: center;
  border-radius: 2px;
  background: #fdf5d1;
  font-size: 15.500px;
  color: #aaa79b;
}
.global-search svg { width: 20px; height: 20px; margin: 0 4px 0 3px; }
.head-ic { position: absolute; }
.bell { left: 1042px; top: 7px; width: 18px; height: 22px; }
.hist { left: 1083px; top: 7px; width: 22px; height: 22px; }
.fav { left: 1124px; top: 6px; width: 22px; height: 22px; }
.admin { position: absolute; left: 1160px; top: 9px; font-size: 14.500px; }
.lines { left: 1280px; top: 9px; width: 20px; height: 20px; }
.wmin { left: 1326px; top: 9px; width: 12px; height: 12px; }
.wmax { left: 1369px; top: 10px; width: 11px; height: 15px; }
.wclose { left: 1410px; top: 11px; width: 12px; height: 14px; }

.sections {
  height: 85px;
  flex: none;
  display: flex;
  background: #fbe99b;
  border-bottom: 1px solid #cdbb64;
  font-size: 15.700px;
  color: #333;
}
.section {
  display: flex;
  align-items: center;
  gap: 17px;
  padding: 0 19.600px;
}
.section:first-child { padding-left: 19px; }
.section svg { width: 60px; height: 60px; flex: none; }
.section-on { background: #fffed6; }

.subpanel {
  flex: none;
  display: flex;
  align-items: center;
  padding-left: 20px;
  box-sizing: border-box;
  background: #fffed6;
  border-bottom: 2px solid #a9a9a9;
  height: 69px;
  font-size: 16.500px;
  color: #4d4d4d;
}

.content {
  flex: 1;
  min-height: 0;
  padding: 11px 23px 0 14px;
  color: #333;
}
.form-head {
  height: 30px;
  display: flex;
  align-items: center;
}
.nav-btns {
  width: 92px;
  height: 30px;
  display: flex;
  box-sizing: border-box;
  border: 1px solid #c4c4c4;
  border-bottom: 2px solid #a9a9a9;
  border-radius: 3px;
  background: linear-gradient(#fff, #f0f0f0);
}
.nav-btn {
  flex: 1;
  padding: 0;
  border: 0;
  background: none;
  display: flex;
  align-items: center;
  justify-content: center;
}
.nav-btn + .nav-btn { border-left: 1px solid #d0d0d0; }
.nav-btn svg { width: 18px; height: 12px; }
.form-star { width: 30px; height: 30px; margin: -2px 0 0 14px; }
h1 {
  margin: -2px 0 0 11px;
  font-size: 23.500px;
  font-weight: 400;
  color: #000;
}
.form-tools { margin-left: auto; margin-top: -4px; display: flex; gap: 17px; }
.form-tools svg { width: 20px; height: 20px; }

.cmd-bar {
  height: 33px;
  margin-top: 10px;
  display: flex;
  align-items: center;
}
.btn {
  height: 33px;
  padding: 0;
  display: flex;
  align-items: center;
  justify-content: center;
  box-sizing: border-box;
  border: 1px solid #c4c4c4;
  border-bottom: 2px solid #a9a9a9;
  border-radius: 3px;
  background: linear-gradient(#fff, #f0f0f0);
  font-family: inherit;
  font-size: 16px;
  color: #4d4d4d;
}
.btn-create { width: 96px; }
.btn-doc { width: 38px; margin-left: 11px; }
.btn-doc svg { width: 18px; height: 22px; }
.find {
  width: 325px;
  height: 28px;
  margin-left: auto;
  display: flex;
  align-items: center;
  box-sizing: border-box;
  border: 1px solid #a9a9a9;
  border-radius: 3px;
  font-size: 16px;
  color: #aaa;
}
.find-text { flex: 1; padding-left: 3px; }
.find-x {
  width: 26px;
  height: 26px;
  border-left: 1px solid #a9a9a9;
  text-align: center;
  font-size: 18px;
  line-height: 26px;
  color: #555;
}
.btn-search { width: 53px; margin-left: 11px; gap: 9px; }
.btn-search svg { width: 16px; height: 16px; }
.btn-more { width: 72px; margin-left: 11px; gap: 9px; padding-left: 6px; }

.grid {
  height: 380px;
  margin-top: 12px;
  box-sizing: border-box;
  border: 1px solid #a9a9a9;
  font-size: 16px;
}
.grid-row {
  display: grid;
  grid-template-columns: 272px 134px 525px 184px 134px 1fr;
}
.grid-headrow { height: 34px; background: #f2f2f2; color: #555; font-size: 15.600px; border-bottom: 1px solid #dcdcdc; box-sizing: content-box; }
.data-row { height: 32px; background: #fff; border-bottom: 1px solid #e6e6e6; box-sizing: content-box; }
.row-alt { background: #f9f9f9; }
.row-sel { background: #fef2c1; }
.cell {
  position: relative;
  display: flex;
  align-items: center;
  padding: 0 10px;
  border-right: 1px solid #e6e6e6;
  white-space: nowrap;
  box-sizing: border-box;
}
.data-row .cell { padding-top: 2px; }
.cell:last-child { border-right: 0; }
.head-cell { border-right-color: #fff; }
.row-sel .cell { border-right-color: #fff; }
.date-cell { gap: 10px; }
.doc-ic { width: 20px; height: 18px; flex: none; }
.num-cell { justify-content: flex-end; }
.cell-cur {
  background: #fde38a;
  box-shadow: inset 0 0 0 3px #fcc81f;
}
.sort { position: absolute; left: 246px; top: 10px; width: 8px; height: 14px; }

.pager {
  width: 121px;
  height: 26px;
  margin-left: auto;
  display: flex;
  box-sizing: border-box;
  border: 1px solid #a9a9a9;
  border-top: 0;
}
.pager span {
  flex: 1;
  display: flex;
  align-items: center;
  justify-content: center;
}
.pager span + span { border-left: 1px solid #a9a9a9; }
.pager svg { width: 14px; height: 10px; }

.win-status {
  height: 39px;
  flex: none;
  background: #aeaeae;
  position: relative;
}
.status-line {
  display: block;
  width: 1122px;
  height: 3px;
  background: #a2a2a2;
}
.status-main {
  display: flex;
  align-items: center;
  padding: 5px 0 0 6px;
}
.status-btn {
  width: 28px;
  height: 26px;
  border-radius: 3px;
  background: #f5f5f5;
  display: flex;
  align-items: center;
  justify-content: center;
}
.status-btn svg { width: 24px; height: 24px; }
.status-text {
  margin: -8px 0 0 6px;
  font-size: 15.600px;
  color: #f00;
}
</style>

<style>
html, body { margin: 0; background: #f4f1dc; }
</style>
